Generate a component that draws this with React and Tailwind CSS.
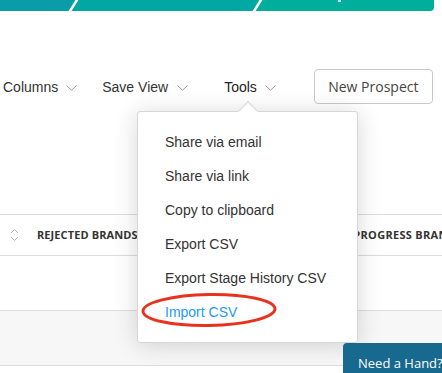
import React from "react";

function Chevron({ className = "" }) {
  return (
    <svg width="11" height="6" viewBox="0 0 11 6" className={className}>
      <path d="M0.5 0.5 L5.5 5.2 L10.5 0.5" fill="none" stroke="#9a9a9a" strokeWidth="1" />
    </svg>
  );
}

function SortIcon() {
  return (
    <svg width="9" height="14" viewBox="0 0 9 14">
      <path d="M1 5 L4.5 1.5 L8 5" fill="none" stroke="#b5b5b5" strokeWidth="1" />
      <path d="M1 9 L4.5 12.5 L8 9" fill="none" stroke="#b5b5b5" strokeWidth="1" />
    </svg>
  );
}

export default function App() {
  const items = [
    "Share via email",
    "Share via link",
    "Copy to clipboard",
    "Export CSV",
    "Export Stage History CSV",
  ];
  return (
    <div className="relative w-[442px] h-[373px] overflow-hidden bg-white">
      {/* top banner */}
      <div className="relative flex h-[11px] w-[434px] overflow-hidden rounded-br-[4px]">
        <div className="w-[74px] bg-[#0a9da9]" />
        <div className="w-[184px] bg-[#01a8a1]" />
        <div className="flex-1 bg-[#00af9b]" />
        <div className="absolute left-[72px] top-[-2px] h-[15px] w-[3px] -skew-x-[32deg] bg-white" />
        <div className="absolute left-[256px] top-[-2px] h-[15px] w-[3px] -skew-x-[32deg] bg-white" />
        <div className="absolute left-[338px] top-0 h-[2px] w-[3px] bg-white/80" />
      </div>

      {/* toolbar */}
      <div className="mt-[58px] flex h-[35px] items-center" style={{ fontFamily: '"Liberation Sans", Arial, sans-serif' }}>
        <div className="ml-[3px] mt-[2px] flex items-center text-[14px] text-[#333]">
          <span>Columns</span>
          <Chevron className="ml-[8px] mt-[1px]" />
        </div>
        <div className="ml-[25px] mt-[2px] flex items-center text-[14px] text-[#333]">
          <span>Save View</span>
          <Chevron className="ml-[9px] mt-[1px]" />
        </div>
        <div className="ml-[36px] mt-[2px] flex items-center text-[14px] text-[#222]">
          <span>Tools</span>
          <Chevron className="ml-[8px] mt-[1px]" />
        </div>
        <button
          className="ml-[38px] h-[35px] w-[119px] rounded-[4px] border border-[#c9c9c9] bg-white text-[14px] text-[#444]"
          style={{ fontFamily: '"Open Sans", sans-serif' }}
        >
          New Prospect
        </button>
      </div>

      {/* table */}
      <div className="mt-[110px]" style={{ fontFamily: '"Open Sans", sans-serif' }}>
        <div className="flex h-[42px] items-center whitespace-nowrap border-y border-[#dcdcdc]">
          <div className="ml-[10px] flex w-[327px] shrink-0 items-center">
            <SortIcon />
            <span className="ml-[18px] text-[11px] font-bold tracking-[0.1px] text-[#333]">REJECTED BRANDS</span>
          </div>
          <span className="text-[11px] font-bold tracking-[0.3px] text-[#333]">IN PROGRESS BRANDS</span>
        </div>
        <div className="h-[55px] border-b border-[#dcdcdc] bg-white" />
        <div className="h-[55px] border-b border-[#dcdcdc] bg-[#f7f7f7]" />
      </div>

      {/* dropdown */}
      <div className="absolute left-[137px] top-[111px] w-[221px] h-[232px] rounded-[3px] border border-[#d6d6d6] bg-white shadow-[0_2px_24px_rgba(0,0,0,0.16)]"
        style={{ fontFamily: '"Liberation Sans", Arial, sans-serif' }}>
        <div className="absolute left-[103px] top-[-8px] h-[14px] w-[14px] rotate-45 border-l border-t border-[#d6d6d6] bg-white" />
        <div className="relative pt-[13px]">
          {items.map((t) => (
            <div key={t} className="flex h-[34px] items-center pl-[27px] text-[14px] text-[#333]">
              {t}
            </div>
          ))}
          <div className="flex h-[34px] items-center pl-[27px] text-[14px] text-[#1e9bf0]">Import CSV</div>
        </div>
      </div>

      {/* red ellipse annotation */}
      <svg className="absolute left-[140px] top-[291px]" width="140" height="38" viewBox="0 0 140 38">
        <ellipse cx="69" cy="19" rx="66" ry="15.5" fill="none" stroke="#e8321e" strokeWidth="3" transform="rotate(-1 69 19)" />
      </svg>

      {/* need a hand */}
      <div className="absolute left-[343px] top-[343px] flex h-[34px] w-[110px] items-start whitespace-nowrap rounded-tl-[4px] bg-[#17698f] pl-[15px] pt-[10px] text-[13px] leading-[20px] text-white"
        style={{ fontFamily: '"Open Sans", sans-serif' }}>
        Need a Hand?
      </div>
    </div>
  );
}
